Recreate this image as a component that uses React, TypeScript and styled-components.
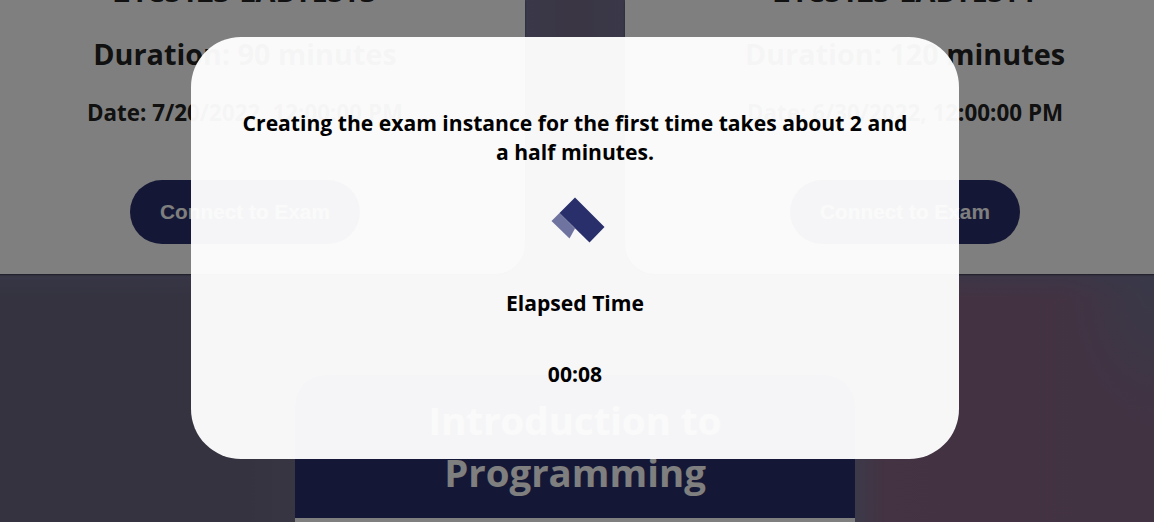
import React from "react";
import styled, { createGlobalStyle } from "styled-components";

const GlobalStyle = createGlobalStyle`
  * { box-sizing: border-box; }
  body { margin: 0; overflow: hidden; font-family: "Open Sans", sans-serif; }
`;

const Page = styled.main`
  position: relative;
  height: 522px;
  overflow: hidden;
  padding-right: 4px;
  background:
    linear-gradient(180deg, rgba(114, 112, 148, 0.7), rgba(114, 112, 148, 0) 24px) 0 274px / 100% 40px no-repeat,
    radial-gradient(ellipse 90px 150px at 1154px 280px, #727290, rgba(114, 114, 144, 0)),
    linear-gradient(90deg, #68667e 0, #6a6680 240px, #706c86 295px, #737094 525px, #766c86 575px, #737094 625px, #787494 855px, #886684 885px, #846686 1154px);
`;

const CardRow = styled.section`
  display: flex;
  justify-content: center;
  gap: 100px;
  height: 274px;
  margin: 0 -35px;
`;

const ExamCard = styled.article`
  flex: 0 0 560px;
  display: flex;
  flex-direction: column;
  align-items: center;
  justify-content: flex-end;
  padding-bottom: 30px;
  border-radius: 0 0 30px 30px;
  background: #fff;
  box-shadow: 0 1px 2px rgba(0, 0, 0, 0.5);
  color: #222;
`;

const CardLine = styled.div<{ $size: number; $height: number }>`
  flex: none;
  font-size: ${(p) => p.$size}px;
  line-height: ${(p) => p.$height}px;
  font-weight: 700;
  white-space: nowrap;
`;

const ConnectButton = styled.button`
  flex: none;
  width: 230px;
  height: 64px;
  margin-top: 38px;
  border: 0;
  border-radius: 32px;
  background: #292f6b;
  color: #fff;
  font: bold 20.8px "Liberation Sans", Arial, sans-serif;
`;

const CourseCard = styled.section`
  width: 560px;
  height: 300px;
  margin: 101px auto 0;
  border-radius: 30px 30px 0 0;
  overflow: hidden;
  background: #fff;
`;

const CourseTitle = styled.h2`
  margin: 0;
  height: 143px;
  padding: 19px 100px 0;
  background: #292f6b;
  color: #fff;
  font-size: 38.4px;
  line-height: 52px;
  font-weight: 700;
  text-align: center;
`;

const Backdrop = styled.div`
  position: absolute;
  inset: 0;
  display: flex;
  justify-content: center;
  align-items: flex-start;
  padding: 37px 4px 0 0;
  background: rgba(0, 0, 0, 0.5);
`;

const Dialog = styled.div`
  width: 768px;
  height: 422px;
  padding: 71px 50px 0;
  border-radius: 50px;
  background: rgba(255, 255, 255, 0.96);
  display: flex;
  flex-direction: column;
  align-items: center;
  color: #000;
  font-size: 21.12px;
  line-height: 29px;
  font-weight: 700;
  text-align: center;
`;

const Message = styled.p`
  margin: 0;
`;

const Logo = styled.svg`
  display: block;
  flex: none;
  width: 56px;
  height: 48px;
  margin: 30px 0 44px 6px;
`;

const Timer = styled.p`
  margin: 42px 0 0;
`;

const exams = [
  { code: "21CS123-LABTEST3", duration: "90 minutes", date: "7/20/2022, 12:00:00 PM" },
  { code: "21CS123-LABTEST1", duration: "120 minutes", date: "6/30/2022, 12:00:00 PM" },
];

export default function App() {
  return (
    <>
      <GlobalStyle />
      <Page>
        <CardRow>
          {exams.map((exam) => (
            <ExamCard key={exam.code}>
              <CardLine $size={28.8} $height={66}>{exam.code}</CardLine>
              <CardLine $size={28.8} $height={60}>Duration: {exam.duration}</CardLine>
              <CardLine $size={22.4} $height={58}>Date: {exam.date}</CardLine>
              <ConnectButton>Connect to Exam</ConnectButton>
            </ExamCard>
          ))}
        </CardRow>
        <CourseCard>
          <CourseTitle>Introduction to Programming</CourseTitle>
        </CourseCard>
        <Backdrop>
          <Dialog role="dialog">
            <Message>Creating the exam instance for the first time takes about 2 and a half minutes.</Message>
            <Logo viewBox="0 0 56 48">
              <path d="M9.5 17 L1.5 25 L19.5 42.5 L25 32.5Z" fill="#6f739f" />
              <path d="M25 1.5 L54.5 31 L39.5 46.5 L9.5 17Z" fill="#292f6b" />
            </Logo>
            <Message>Elapsed Time</Message>
            <Timer>00:08</Timer>
          </Dialog>
        </Backdrop>
      </Page>
    </>
  );
}
